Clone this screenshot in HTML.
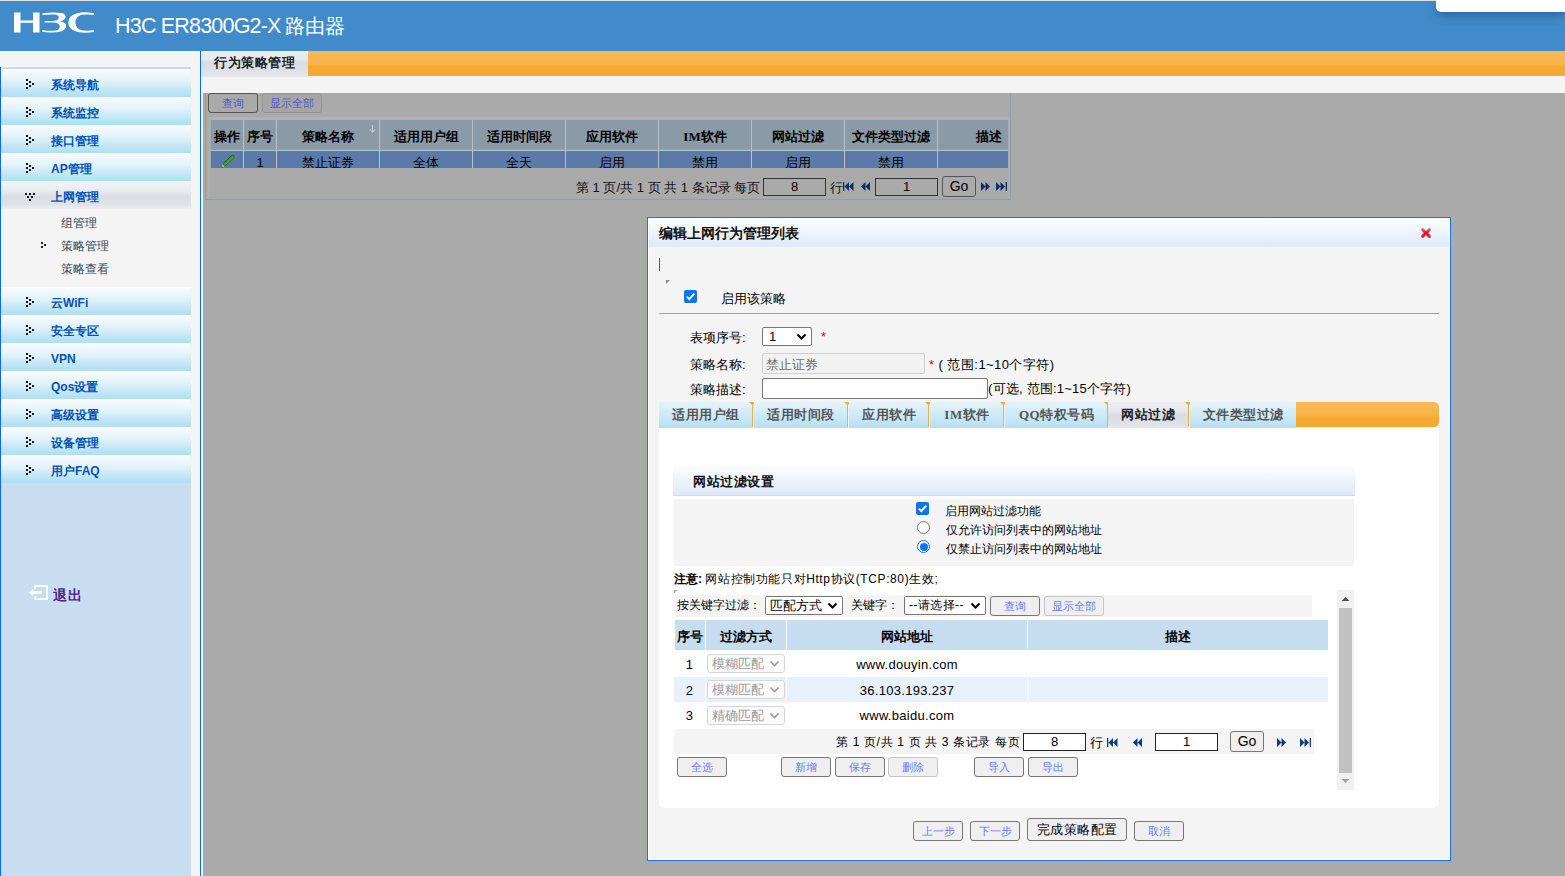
<!DOCTYPE html>
<html><head><meta charset="utf-8">
<style>
*{box-sizing:border-box;}
html,body{margin:0;padding:0;}
body{width:1565px;height:876px;overflow:hidden;position:relative;background:#f4f4f4;font-family:"Liberation Sans",sans-serif;font-size:13px;color:#000;}
.a{position:absolute;}
.t{position:absolute;white-space:nowrap;line-height:1;}
/* header */
#topline{left:0;top:0;width:1565px;height:1px;background:#e4e0da;}
#hdr{left:0;top:1px;width:1565px;height:50px;background:#418bca;}
#wtab{left:1436px;top:0;width:129px;height:12px;background:#fff;border-bottom-left-radius:5px;box-shadow:0 4px 10px rgba(0,40,80,.35);}
/* sidebar */
#sbline{left:0;top:67px;width:1px;height:809px;background:#0a6cf2;}
.mi{position:absolute;left:1px;width:190px;height:28px;background:linear-gradient(#f9fcfe 0%,#e4f3fa 40%,#c2e6f5 75%,#addff2 100%);}
.mi .lb{position:absolute;left:50px;top:10px;font-size:12px;font-weight:bold;color:#0052b6;white-space:nowrap;line-height:12px;}
.mi svg{position:absolute;left:0;top:0;}
#sblow{left:1px;top:483px;width:190px;height:393px;background:#c8ddf0;}
#cline{left:200px;top:51px;width:1px;height:825px;background:#0a6cf2;}
/* tab */
#tab1{left:201px;top:51px;width:107px;height:26px;background:linear-gradient(#eaedf0 0%,#e6e9ed 30%,#d8dde2 45%,#e3e6ea 100%);border-top-right-radius:4px;}
#obar{left:308px;top:51px;width:1257px;height:25px;background:linear-gradient(#f8b955 0%,#f7b44c 50%,#f5aa35 60%,#f5a933 100%);}
/* overlay area */
#ov{left:203px;top:93px;width:1362px;height:783px;background:#aaaaaa;}

.btn{position:absolute;height:20px;border:1px solid #767676;border-radius:3px;background:#efefef;color:#6a7cff;font-size:11px;text-align:center;line-height:18px;white-space:nowrap;}
.btn.dis{border-color:#c6c6c6;}
.ovb{border-color:#555;background:#aaaaaa;color:#4c5cc2;}
.ovb.dis{border-color:#929292;background:#a6a6a6;}
.lh{position:absolute;top:120px;height:30px;background:#8b9aa7;font-weight:bold;font-size:13px;text-align:center;line-height:33px;white-space:nowrap;color:#000;}
.lr{position:absolute;top:151px;height:17px;background:#5b7aa8;font-size:13px;text-align:center;line-height:23px;white-space:nowrap;color:#000;overflow:hidden;}
.pinp{position:absolute;height:18px;border:1px solid #222;background:#fff;font-size:13px;text-align:center;line-height:16px;}

#dlg{left:647px;top:217px;width:804px;height:644px;border:1px solid #1a73e8;background:#f4f4f4;}
#dlgin{left:648px;top:218px;width:802px;height:642px;border:1px solid #fff;}
#dtitle{left:649px;top:219px;width:800px;height:28px;background:linear-gradient(#fbfdff 0%,#eef4fc 50%,#dde9f8 100%);}
.lbl{position:absolute;white-space:nowrap;line-height:1;font-size:13px;color:#000;}
.sel{position:absolute;height:19px;border:1px solid #767676;border-radius:2px;background:#fff;font-size:13px;white-space:nowrap;line-height:17px;padding-left:6px;}
.sel svg{position:absolute;right:4px;top:5px;}
.chk{position:absolute;width:13px;height:13px;background:#0b75f0;border-radius:2px;}
.rad{position:absolute;width:13px;height:13px;border-radius:50%;border:1px solid #767676;background:#fff;}
.dt{position:absolute;top:402px;height:26px;background:linear-gradient(#e5f3fb 0%,#cfeaf7 50%,#b4dff2 100%);font-weight:bold;font-size:13px;color:#555;text-align:center;line-height:26px;white-space:nowrap;letter-spacing:0.5px;}
.osep{position:absolute;top:402px;width:1px;height:25px;background:#f4ac3c;}

.th2{position:absolute;top:620px;height:30px;background:#c6dcef;font-weight:bold;font-size:13px;text-align:center;line-height:34px;white-space:nowrap;}
.td2{position:absolute;font-size:13px;letter-spacing:0.3px;text-align:center;white-space:nowrap;line-height:28px;height:26px;}
.dsel{position:absolute;left:707px;width:78px;height:19px;border:1px solid #d6d6d6;border-radius:3px;background:#fafafa;color:#9a9a9a;font-size:13px;line-height:17px;padding-left:4px;white-space:nowrap;}
.dsel svg{position:absolute;right:4px;top:5px;}
</style></head>
<body>
<div class="a" id="topline"></div>
<div class="a" id="hdr"></div>
<svg class="a" style="left:13px;top:12px" width="83" height="22" viewBox="0 0 83 22">
<g fill="#fff">
<rect x="1" y="0.5" width="6.5" height="20"/><rect x="20" y="0.5" width="6.5" height="20"/><rect x="6" y="8.5" width="16" height="2.3"/>
<path d="M29.5 1.2 Q40 -0.3 50.2 1.2 Q52.8 2.5 52.6 5 Q52 8.4 47 9.3 Q53.2 10.3 53.2 14.2 Q52.8 19 45 20 Q36 21.3 29.2 19.8 L29.2 18 Q37 19.3 43.2 18.6 Q46.8 17.6 46.8 14.3 Q46.5 10.8 40 10.5 L31.5 10.5 L31.5 9 L40.5 9 Q45.7 8.5 45.8 5.5 Q45.7 2.7 41 2.6 Q35 2.5 29.5 3 Z"/>
<path d="M81 1.2 Q72 -0.6 64 1.2 Q55.5 3.5 55.3 10.5 Q55.6 17.6 64 19.8 Q72 21.6 81 19.9 L81 18.2 Q74 19 69 18.3 Q62.5 17 62.4 10.5 Q62.6 4 69 2.8 Q74 2 81 2.9 Z"/>
</g></svg>
<div class="t" style="left:115px;top:16px;font-size:21.5px;color:#fff;letter-spacing:-0.8px;">H3C ER8300G2-X</div><div class="t" style="left:285px;top:16px;font-size:20px;color:#fff;">路由器</div>
<div class="a" id="wtab"></div>

<!-- sidebar -->
<div class="a" id="sbline"></div>
<div class="a" style="left:1px;top:67px;width:190px;height:2px;background:#c6dcef;"></div>
<div class="mi" style="top:69px"><svg width="40" height="28"><g fill="#111"><rect x="25" y="10" width="2" height="2"/><rect x="28" y="12" width="2" height="2"/><rect x="31" y="14" width="2" height="2"/><rect x="25" y="14" width="2" height="2"/><rect x="28" y="16" width="2" height="2"/><rect x="25" y="18" width="2" height="2"/></g></svg><span class="lb">系统导航</span></div>
<div class="mi" style="top:97px"><svg width="40" height="28"><g fill="#111"><rect x="25" y="10" width="2" height="2"/><rect x="28" y="12" width="2" height="2"/><rect x="31" y="14" width="2" height="2"/><rect x="25" y="14" width="2" height="2"/><rect x="28" y="16" width="2" height="2"/><rect x="25" y="18" width="2" height="2"/></g></svg><span class="lb">系统监控</span></div>
<div class="mi" style="top:125px"><svg width="40" height="28"><g fill="#111"><rect x="25" y="10" width="2" height="2"/><rect x="28" y="12" width="2" height="2"/><rect x="31" y="14" width="2" height="2"/><rect x="25" y="14" width="2" height="2"/><rect x="28" y="16" width="2" height="2"/><rect x="25" y="18" width="2" height="2"/></g></svg><span class="lb">接口管理</span></div>
<div class="mi" style="top:153px"><svg width="40" height="28"><g fill="#111"><rect x="25" y="10" width="2" height="2"/><rect x="28" y="12" width="2" height="2"/><rect x="31" y="14" width="2" height="2"/><rect x="25" y="14" width="2" height="2"/><rect x="28" y="16" width="2" height="2"/><rect x="25" y="18" width="2" height="2"/></g></svg><span class="lb">AP管理</span></div>
<div class="mi" style="top:181px;background:linear-gradient(#f2f4f6 0%,#e9ecef 35%,#dadee3 55%,#e0e3e7 85%,#eef0f2 100%);"><svg width="40" height="28"><g fill="#111"><rect x="24" y="12" width="2" height="2"/><rect x="28" y="12" width="2" height="2"/><rect x="32" y="12" width="2" height="2"/><rect x="26" y="15" width="2" height="2"/><rect x="30" y="15" width="2" height="2"/><rect x="28" y="18" width="2" height="2"/></g></svg><span class="lb">上网管理</span></div>
<div class="t" style="left:61px;top:217px;font-size:12px;color:#33435b;">组管理</div>
<svg class="a" style="left:40px;top:241px" width="8" height="8"><g fill="#222"><rect x="1" y="1" width="2" height="2"/><rect x="4" y="3" width="2" height="2"/><rect x="1" y="5" width="2" height="2"/></g></svg>
<div class="t" style="left:61px;top:240px;font-size:12px;color:#33435b;">策略管理</div>
<div class="t" style="left:61px;top:263px;font-size:12px;color:#33435b;">策略查看</div>
<div class="mi" style="top:287px"><svg width="40" height="28"><g fill="#111"><rect x="25" y="10" width="2" height="2"/><rect x="28" y="12" width="2" height="2"/><rect x="31" y="14" width="2" height="2"/><rect x="25" y="14" width="2" height="2"/><rect x="28" y="16" width="2" height="2"/><rect x="25" y="18" width="2" height="2"/></g></svg><span class="lb">云WiFi</span></div>
<div class="mi" style="top:315px"><svg width="40" height="28"><g fill="#111"><rect x="25" y="10" width="2" height="2"/><rect x="28" y="12" width="2" height="2"/><rect x="31" y="14" width="2" height="2"/><rect x="25" y="14" width="2" height="2"/><rect x="28" y="16" width="2" height="2"/><rect x="25" y="18" width="2" height="2"/></g></svg><span class="lb">安全专区</span></div>
<div class="mi" style="top:343px"><svg width="40" height="28"><g fill="#111"><rect x="25" y="10" width="2" height="2"/><rect x="28" y="12" width="2" height="2"/><rect x="31" y="14" width="2" height="2"/><rect x="25" y="14" width="2" height="2"/><rect x="28" y="16" width="2" height="2"/><rect x="25" y="18" width="2" height="2"/></g></svg><span class="lb">VPN</span></div>
<div class="mi" style="top:371px"><svg width="40" height="28"><g fill="#111"><rect x="25" y="10" width="2" height="2"/><rect x="28" y="12" width="2" height="2"/><rect x="31" y="14" width="2" height="2"/><rect x="25" y="14" width="2" height="2"/><rect x="28" y="16" width="2" height="2"/><rect x="25" y="18" width="2" height="2"/></g></svg><span class="lb">Qos设置</span></div>
<div class="mi" style="top:399px"><svg width="40" height="28"><g fill="#111"><rect x="25" y="10" width="2" height="2"/><rect x="28" y="12" width="2" height="2"/><rect x="31" y="14" width="2" height="2"/><rect x="25" y="14" width="2" height="2"/><rect x="28" y="16" width="2" height="2"/><rect x="25" y="18" width="2" height="2"/></g></svg><span class="lb">高级设置</span></div>
<div class="mi" style="top:427px"><svg width="40" height="28"><g fill="#111"><rect x="25" y="10" width="2" height="2"/><rect x="28" y="12" width="2" height="2"/><rect x="31" y="14" width="2" height="2"/><rect x="25" y="14" width="2" height="2"/><rect x="28" y="16" width="2" height="2"/><rect x="25" y="18" width="2" height="2"/></g></svg><span class="lb">设备管理</span></div>
<div class="mi" style="top:455px"><svg width="40" height="28"><g fill="#111"><rect x="25" y="10" width="2" height="2"/><rect x="28" y="12" width="2" height="2"/><rect x="31" y="14" width="2" height="2"/><rect x="25" y="14" width="2" height="2"/><rect x="28" y="16" width="2" height="2"/><rect x="25" y="18" width="2" height="2"/></g></svg><span class="lb">用户FAQ</span></div>
<div class="a" id="sblow"></div>
<svg class="a" style="left:28px;top:584px" width="21" height="17" viewBox="0 0 21 17">
<g fill="#fff"><path d="M6 1 H20 V16 H6 V12.5 H8 V14 H18 V3 H8 V4.5 H6 Z"/><path d="M1 8.5 L5 4.8 V7.1 H14 V9.9 H5 V12.2 Z"/></g></svg>
<div class="t" style="left:53px;top:589px;font-size:13.5px;font-weight:bold;color:#551a8b;letter-spacing:0.8px;">退出</div>

<div class="a" id="cline"></div>
<div class="a" id="tab1"></div>
<div class="t" style="left:214px;top:56px;font-size:13px;font-weight:bold;color:#222;letter-spacing:0.5px;">行为策略管理</div>
<div class="a" id="obar"></div>

<div class="a" id="ov"></div>

<!-- list panel under overlay -->
<div class="a" style="left:205px;top:93px;width:1px;height:107px;background:#8d9fb0;"></div>
<div class="a" style="left:1010px;top:93px;width:1px;height:107px;background:#8d9fb0;"></div>
<div class="a" style="left:205px;top:199px;width:806px;height:1px;background:#8d9fb0;"></div>
<div class="btn ovb" style="left:208px;top:93px;width:50px;">查询</div>
<div class="btn ovb dis" style="left:262px;top:93px;width:60px;">显示全部</div>
<div class="a" style="left:208px;top:117px;width:801px;height:3px;background:#b2b2b2;"></div><div class="a" style="left:208px;top:117px;width:2px;height:82px;background:#afafaf;"></div><div class="a" style="left:1008px;top:117px;width:2px;height:82px;background:#afafaf;"></div>
<div class="a" style="left:211px;top:120px;width:797px;height:48px;background:#b8c2ca;"></div>
<div class="lh" style="left:211px;width:32px;">操作</div>
<div class="lh" style="left:244px;width:32px;">序号</div>
<div class="lh" style="left:277px;width:102px;">策略名称</div>
<div class="lh" style="left:380px;width:92px;">适用用户组</div>
<div class="lh" style="left:473px;width:92px;">适用时间段</div>
<div class="lh" style="left:566px;width:92px;">应用软件</div>
<div class="lh" style="left:659px;width:92px;"><span style="font-family:'Liberation Serif',serif;font-size:13px;">IM</span>软件</div>
<div class="lh" style="left:752px;width:92px;">网站过滤</div>
<div class="lh" style="left:845px;width:92px;">文件类型过滤</div>
<div class="lh" style="left:938px;width:70px;text-align:right;padding-right:6px;">描述</div>
<svg class="a" style="left:369px;top:125px" width="7" height="8" viewBox="0 0 7 8"><path d="M3.5 0 V7 M0.8 4.3 L3.5 7 L6.2 4.3" fill="none" stroke="#c0c8d0" stroke-width="1.2"/></svg>
<div class="lr" style="left:211px;width:32px;"></div>
<svg class="a" style="left:220px;top:153px" width="16" height="16" viewBox="0 0 16 16"><defs><linearGradient id="pg" x1="0.2" y1="0.2" x2="0.8" y2="0.8"><stop offset="0" stop-color="#0f7a08"/><stop offset="0.45" stop-color="#3f9a10"/><stop offset="1" stop-color="#8cc070"/></linearGradient></defs><path d="M4.6 13.4 L2.4 11.2 L11.6 2.6 Q12.8 1.8 13.8 2.8 Q14.6 3.9 13.9 5 Z" fill="url(#pg)" stroke="#0a4f0a" stroke-width="0.6"/><path d="M1.6 14.4 L2.4 11.2 L4.6 13.4 Z" fill="#c8d0b0"/><path d="M1.4 14.7 L1.9 12.9 L3.2 14.2 Z" fill="#0a4a0a"/></svg>
<div class="lr" style="left:244px;width:32px;">1</div>
<div class="lr" style="left:277px;width:102px;">禁止证券</div>
<div class="lr" style="left:380px;width:92px;">全体</div>
<div class="lr" style="left:473px;width:92px;">全天</div>
<div class="lr" style="left:566px;width:92px;">启用</div>
<div class="lr" style="left:659px;width:92px;">禁用</div>
<div class="lr" style="left:752px;width:92px;">启用</div>
<div class="lr" style="left:845px;width:92px;">禁用</div>
<div class="lr" style="left:938px;width:70px;"></div>
<div class="t" style="left:576px;top:181px;font-size:13px;color:#111;">第 1 页/共 1 页 共 1 条记录 每页</div>
<div class="pinp" style="left:763px;top:178px;width:63px;background:#aaaaaa;border-color:#333;">8</div>
<div class="t" style="left:830px;top:181px;font-size:13px;color:#111;">行</div>
<div class="pinp" style="left:875px;top:178px;width:63px;background:#aaaaaa;border-color:#333;">1</div>
<div class="btn ovb" style="left:942px;top:176px;width:34px;height:21px;color:#000;font-size:14px;border-color:#555;">Go</div>

<!-- dialog -->
<div class="a" id="dlg"></div>
<div class="a" id="dlgin"></div>
<div class="a" id="dtitle"></div>
<div class="t" style="left:659px;top:226px;font-size:14px;font-weight:bold;color:#111;">编辑上网行为管理列表</div>
<svg class="a" style="left:1420px;top:227px" width="12" height="12" viewBox="0 0 12 12"><defs><linearGradient id="xg" x1="0" y1="0" x2="0" y2="1"><stop offset="0" stop-color="#e85a68"/><stop offset="0.5" stop-color="#e01020"/><stop offset="1" stop-color="#e8202c"/></linearGradient></defs><path d="M2.6 2.6 L9.4 9.4 M9.4 2.6 L2.6 9.4" stroke="url(#xg)" stroke-width="2.9" stroke-linecap="round"/></svg>
<div class="a" style="left:659px;top:258px;width:1px;height:13px;background:#555;"></div>
<svg class="a" style="left:666px;top:280px" width="5" height="5"><path d="M0 0 H4 L0 4 Z" fill="#888"/></svg>
<div class="chk" style="left:684px;top:290px;"><svg width="13" height="13" viewBox="0 0 13 13" style="position:absolute;left:0;top:0"><path d="M2.8 6.6 L5.3 9.1 L10.3 3.6" fill="none" stroke="#fff" stroke-width="1.9"/></svg></div>
<div class="lbl" style="left:721px;top:292px;">启用该策略</div>
<div class="a" style="left:659px;top:313px;width:780px;height:1px;background:#a0a0a0;"></div>
<div class="lbl" style="left:690px;top:331px;">表项序号:</div>
<div class="sel" style="left:762px;top:327px;width:50px;">1<svg width="11" height="8" viewBox="0 0 11 8"><path d="M1.5 1.5 L5.5 5.5 L9.5 1.5" fill="none" stroke="#000" stroke-width="2"/></svg></div>
<div class="lbl" style="left:821px;top:330px;color:#f00;">*</div>
<div class="lbl" style="left:690px;top:358px;">策略名称:</div>
<div class="a" style="left:762px;top:353px;width:163px;height:21px;border:1px solid #d0d0d0;border-radius:2px;background:#f2f2f2;"></div>
<div class="lbl" style="left:766px;top:358px;color:#6d6d6d;">禁止证券</div>
<div class="lbl" style="left:929px;top:358px;letter-spacing:0.45px;"><span style="color:#f00">*</span> ( 范围:1~10个字符)</div>
<div class="lbl" style="left:690px;top:383px;">策略描述:</div>
<div class="a" style="left:762px;top:378px;width:226px;height:21px;border:1px solid #767676;border-radius:2px;background:#fff;"></div>
<div class="lbl" style="left:988px;top:382px;letter-spacing:0.2px;">(可选, 范围:1~15个字符)</div>

<!-- tabs -->
<div class="a" style="left:1296px;top:402px;width:143px;height:25px;background:linear-gradient(#f8b955 0%,#f7b44c 50%,#f5aa35 60%,#f5a933 100%);border-radius:0 5px 5px 0;"></div>
<div class="dt" style="left:659px;width:94px;">适用用户组</div>
<svg class="a" style="left:749px;top:402px" width="7" height="26" viewBox="0 0 7 26"><path d="M0 0 H7 L4 3 V25 H3 V3 Z" fill="#f4ac3c"/></svg>
<div class="dt" style="left:754px;width:94px;">适用时间段</div>
<svg class="a" style="left:844px;top:402px" width="7" height="26" viewBox="0 0 7 26"><path d="M0 0 H7 L4 3 V25 H3 V3 Z" fill="#f4ac3c"/></svg>
<div class="dt" style="left:849px;width:80px;">应用软件</div>
<svg class="a" style="left:925px;top:402px" width="7" height="26" viewBox="0 0 7 26"><path d="M0 0 H7 L4 3 V25 H3 V3 Z" fill="#f4ac3c"/></svg>
<div class="dt" style="left:930px;width:74px;"><span style="font-family:'Liberation Serif',serif;font-size:13px;">IM</span>软件</div>
<svg class="a" style="left:1000px;top:402px" width="7" height="26" viewBox="0 0 7 26"><path d="M0 0 H7 L4 3 V25 H3 V3 Z" fill="#f4ac3c"/></svg>
<div class="dt" style="left:1005px;width:103px;"><span style="font-family:'Liberation Serif',serif;font-size:13px;">QQ</span>特权号码</div>
<svg class="a" style="left:1104px;top:402px" width="7" height="26" viewBox="0 0 7 26"><path d="M0 0 H7 L4 3 V25 H3 V3 Z" fill="#f4ac3c"/></svg>
<div class="dt" style="left:1108px;width:80px;height:27px;background:linear-gradient(#eaedf0 0%,#e6e9ed 30%,#d8dde2 50%,#e3e6ea 100%);color:#222;">网站过滤</div>
<svg class="a" style="left:1185px;top:402px" width="7" height="26" viewBox="0 0 7 26"><path d="M0 0 H7 L4 3 V25 H3 V3 Z" fill="#f4ac3c"/></svg>
<div class="dt" style="left:1190px;width:106px;">文件类型过滤</div>

<!-- white panel -->
<div class="a" style="left:659px;top:428px;width:780px;height:380px;background:#fff;border-radius:0 0 5px 5px;"></div>
<div class="a" style="left:673px;top:466px;width:682px;height:30px;background:linear-gradient(#fbfdff 0%,#eef4fc 50%,#dce8f8 100%);border-bottom:1px solid #c8dcf2;"></div>
<div class="t" style="left:693px;top:475px;font-size:13px;font-weight:bold;color:#111;letter-spacing:0.5px;">网站过滤设置</div>
<div class="a" style="left:674px;top:499px;width:680px;height:67px;background:#f4f4f4;"></div>
<div class="chk" style="left:916px;top:502px;"><svg width="13" height="13" viewBox="0 0 13 13" style="position:absolute;left:0;top:0"><path d="M2.8 6.6 L5.3 9.1 L10.3 3.6" fill="none" stroke="#fff" stroke-width="1.9"/></svg></div>
<div class="lbl" style="left:945px;top:505px;font-size:12px;">启用网站过滤功能</div>
<div class="rad" style="left:917px;top:521px;"></div>
<div class="lbl" style="left:946px;top:524px;font-size:12px;">仅允许访问列表中的网站地址</div>
<div class="rad" style="left:917px;top:540px;border:1px solid #0b75f0;"><div style="position:absolute;left:1.5px;top:1.5px;width:8px;height:8px;border-radius:50%;background:#0b75f0;"></div></div>
<div class="lbl" style="left:946px;top:543px;font-size:12px;">仅禁止访问列表中的网站地址</div>
<div class="lbl" style="left:674px;top:573px;font-size:12px;"><b>注意:</b> <span style="letter-spacing:0.6px">网站控制功能只对Http协议(TCP:80)生效;</span></div>
<svg class="a" style="left:674px;top:590px" width="4" height="4"><path d="M0 0 H3 V1 H1 V3 H0 Z" fill="#999"/></svg>

<!-- filter bar -->
<div class="a" style="left:676px;top:595px;width:636px;height:22px;background:#f4f4f4;"></div>
<div class="lbl" style="left:677px;top:599px;font-size:12px;">按关键字过滤：</div>
<div class="sel" style="left:765px;top:596px;width:78px;padding-left:4px;">匹配方式<svg width="11" height="8" viewBox="0 0 11 8"><path d="M1.5 1.5 L5.5 5.5 L9.5 1.5" fill="none" stroke="#000" stroke-width="2"/></svg></div>
<div class="lbl" style="left:851px;top:599px;font-size:12px;">关键字：</div>
<div class="sel" style="left:904px;top:596px;width:82px;padding-left:4px;font-size:12px;letter-spacing:0.4px;">--请选择--<svg width="11" height="8" viewBox="0 0 11 8"><path d="M1.5 1.5 L5.5 5.5 L9.5 1.5" fill="none" stroke="#000" stroke-width="2"/></svg></div>
<div class="btn" style="left:990px;top:596px;width:50px;">查询</div>
<div class="btn dis" style="left:1044px;top:596px;width:60px;">显示全部</div>

<!-- table -->
<div class="a" style="left:674px;top:620px;width:654px;height:30px;background:#fff;"></div>
<div class="th2" style="left:675px;width:30px;">序号</div>
<div class="th2" style="left:706px;width:80px;">过滤方式</div>
<div class="th2" style="left:787px;width:240px;">网站地址</div>
<div class="th2" style="left:1028px;width:300px;">描述</div>
<div class="a" style="left:674px;top:677px;width:31px;height:25px;background:#e8f1fb;"></div>
<div class="a" style="left:706px;top:677px;width:80px;height:25px;background:#e8f1fb;"></div>
<div class="a" style="left:787px;top:677px;width:240px;height:25px;background:#e8f1fb;"></div>
<div class="a" style="left:1028px;top:677px;width:300px;height:25px;background:#e8f1fb;"></div>
<div class="td2" style="left:674px;top:651px;width:31px;">1</div>
<div class="dsel" style="top:654px;">模糊匹配<svg width="11" height="8" viewBox="0 0 11 8"><path d="M1.5 1.5 L5.5 5.5 L9.5 1.5" fill="none" stroke="#9a9a9a" stroke-width="1.6"/></svg></div>
<div class="td2" style="left:787px;top:651px;width:240px;">www.douyin.com</div>
<div class="td2" style="left:674px;top:677px;width:31px;">2</div>
<div class="dsel" style="top:680px;">模糊匹配<svg width="11" height="8" viewBox="0 0 11 8"><path d="M1.5 1.5 L5.5 5.5 L9.5 1.5" fill="none" stroke="#9a9a9a" stroke-width="1.6"/></svg></div>
<div class="td2" style="left:787px;top:677px;width:240px;">36.103.193.237</div>
<div class="td2" style="left:674px;top:702px;width:31px;">3</div>
<div class="dsel" style="top:706px;">精确匹配<svg width="11" height="8" viewBox="0 0 11 8"><path d="M1.5 1.5 L5.5 5.5 L9.5 1.5" fill="none" stroke="#9a9a9a" stroke-width="1.6"/></svg></div>
<div class="td2" style="left:787px;top:702px;width:240px;">www.baidu.com</div>

<!-- pager -->
<div class="a" style="left:674px;top:729px;width:640px;height:25px;background:#f4f4f4;"></div>
<div class="lbl" style="left:836px;top:736px;font-size:12px;letter-spacing:0.65px;">第 1 页/共 1 页 共 3 条记录 每页</div>
<div class="pinp" style="left:1023px;top:733px;width:63px;">8</div>
<div class="lbl" style="left:1090px;top:736px;font-size:13px;">行</div>
<div class="pinp" style="left:1155px;top:733px;width:63px;">1</div>
<div class="btn" style="left:1230px;top:731px;width:34px;height:21px;color:#000;font-size:14px;">Go</div>

<!-- scrollbar -->
<div class="a" style="left:1337px;top:590px;width:17px;height:200px;background:#f1f1f1;"></div>
<div class="a" style="left:1339px;top:608px;width:13px;height:165px;background:#c1c1c1;"></div>
<svg class="a" style="left:1341px;top:596px" width="9" height="6"><path d="M0.5 5 L4.5 1 L8.5 5 Z" fill="#505050"/></svg>
<svg class="a" style="left:1341px;top:778px" width="9" height="6"><path d="M0.5 1 L4.5 5 L8.5 1 Z" fill="#a3a3a3"/></svg>

<!-- buttons row -->
<div class="btn" style="left:677px;top:757px;width:50px;">全选</div>
<div class="btn" style="left:781px;top:757px;width:50px;">新增</div>
<div class="btn" style="left:835px;top:757px;width:50px;">保存</div>
<div class="btn dis" style="left:888px;top:757px;width:50px;">删除</div>
<div class="btn" style="left:974px;top:757px;width:50px;">导入</div>
<div class="btn" style="left:1028px;top:757px;width:50px;">导出</div>

<!-- footer -->
<div class="btn" style="left:913px;top:821px;width:50px;">上一步</div>
<div class="btn" style="left:970px;top:821px;width:50px;">下一步</div>
<div class="btn" style="left:1027px;top:818px;width:100px;height:23px;color:#000;font-size:13px;line-height:21px;letter-spacing:0.5px;">完成策略配置</div>
<div class="btn" style="left:1134px;top:821px;width:50px;">取消</div>
<!-- nav icons -->
<svg class="a" style="left:1107px;top:738px" width="11" height="9" viewBox="0 0 11 9"><rect x="0" y="0" width="1.3" height="9" fill="#0b3a8e"/><path d="M1.5 4.5 L6 0 V9 Z M6 4.5 L10.5 0 V9 Z" fill="#0b3a8e"/></svg>
<svg class="a" style="left:1133px;top:738px" width="9" height="9" viewBox="0 0 9 9"><path d="M0 4.5 L4.5 0 V9 Z M4.5 4.5 L9 0 V9 Z" fill="#0b3a8e"/></svg>
<svg class="a" style="left:1277px;top:738px" width="9" height="9" viewBox="0 0 9 9"><path d="M9 4.5 L4.5 0 V9 Z M4.5 4.5 L0 0 V9 Z" fill="#0b3a8e"/></svg>
<svg class="a" style="left:1300px;top:738px" width="11" height="9" viewBox="0 0 11 9"><path d="M4.5 4.5 L0 0 V9 Z M9 4.5 L4.5 0 V9 Z" fill="#0b3a8e"/><rect x="9.7" y="0" width="1.3" height="9" fill="#0b3a8e"/></svg>
<svg class="a" style="left:843px;top:182px" width="11" height="9" viewBox="0 0 11 9"><rect x="0" y="0" width="1.3" height="9" fill="#0b2c6e"/><path d="M1.5 4.5 L6 0 V9 Z M6 4.5 L10.5 0 V9 Z" fill="#0b2c6e"/></svg>
<svg class="a" style="left:861px;top:182px" width="9" height="9" viewBox="0 0 9 9"><path d="M0 4.5 L4.5 0 V9 Z M4.5 4.5 L9 0 V9 Z" fill="#0b2c6e"/></svg>
<svg class="a" style="left:981px;top:182px" width="9" height="9" viewBox="0 0 9 9"><path d="M9 4.5 L4.5 0 V9 Z M4.5 4.5 L0 0 V9 Z" fill="#0b2c6e"/></svg>
<svg class="a" style="left:996px;top:182px" width="11" height="9" viewBox="0 0 11 9"><path d="M4.5 4.5 L0 0 V9 Z M9 4.5 L4.5 0 V9 Z" fill="#0b2c6e"/><rect x="9.7" y="0" width="1.3" height="9" fill="#0b2c6e"/></svg>
</body></html>
